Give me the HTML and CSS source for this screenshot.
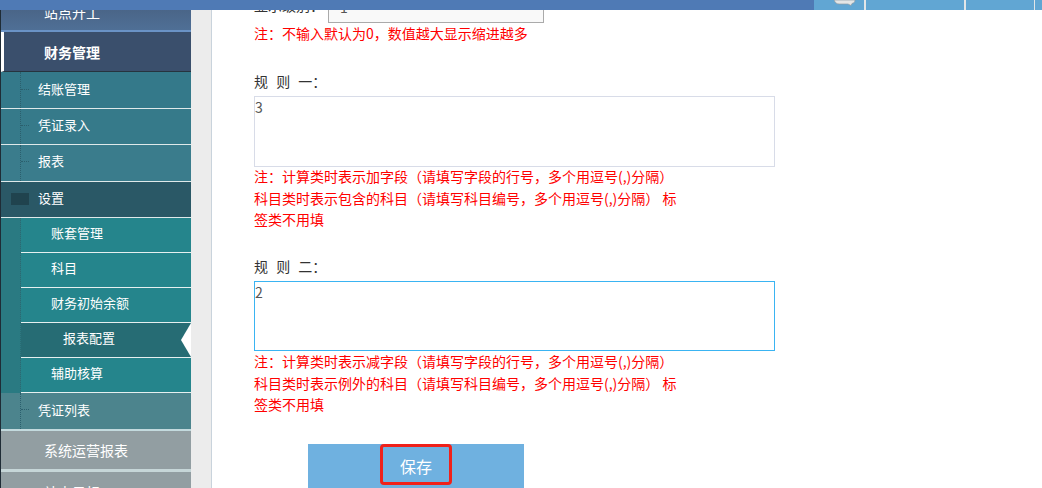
FILE: index.html
```html
<!DOCTYPE html>
<html lang="zh">
<head>
<meta charset="UTF-8">
<title>报表配置</title>
<link rel="stylesheet" href="styles.css">
</head>
<body>

<div class="topbar">
    <div class="top-fill"></div>
    <div class="top-btn top-msg">
        <svg class="msg-icon" width="22" height="6" viewBox="0 0 22 6">
            <path d="M0 0H21C21 2 20 3 18 3.500L17 5.500L14 4H5C2 4 1 2 0 0Z" fill="#e4e6e6" stroke="#8f9ba3" stroke-width="0.7"/>
        </svg>
    </div>
    <div class="top-btn top-wide"></div>
    <div class="top-btn top-mid"></div>
    <div class="top-btn top-end"></div>
</div>

<div class="layout">
    <div class="sidebar">
        <div class="nav-head nav-site"><span>站点开工</span></div>
        <div class="nav-head nav-finance">财务管理</div>
        <div class="nav-item nav-tall"><i class="dots"></i>结账管理</div>
        <div class="nav-item"><i class="dots"></i>凭证录入</div>
        <div class="nav-item nav-third"><i class="dots"></i>报表</div>
        <div class="nav-item nav-open"><i class="nav-icon"></i>设置</div>
        <div class="subnav">
            <div class="sub-item">账套管理</div>
            <div class="sub-item">科目</div>
            <div class="sub-item">财务初始余额</div>
            <div class="sub-item sub-active">报表配置</div>
            <div class="sub-item sub-last">辅助核算</div>
        </div>
        <div class="nav-item nav-last"><i class="dots"></i>凭证列表</div>
        <div class="nav-head nav-report">系统运营报表</div>
        <div class="nav-head nav-more"><span>站点目标</span></div>
    </div>
    <div class="gutter"></div>
    <div class="main">
        <div class="level-row">
            <label class="level-label">显示级别：</label>
            <input class="level-input" type="text" value="1">
        </div>
        <p class="note">注：不输入默认为0，数值越大显示缩进越多</p>

        <label class="rule-label rule-first">规 则 一：</label>
        <textarea class="rule-box">3</textarea>
        <p class="note note-tight">注：计算类时表示加字段（请填写字段的行号，多个用逗号(,)分隔）<br>科目类时表示包含的科目（请填写科目编号，多个用逗号(,)分隔） 标签类不用填</p>

        <label class="rule-label rule-second">规 则 二：</label>
        <textarea class="rule-box rule-focus">2</textarea>
        <p class="note">注：计算类时表示减字段（请填写字段的行号，多个用逗号(,)分隔）<br>科目类时表示例外的科目（请填写科目编号，多个用逗号(,)分隔） 标签类不用填</p>

        <div class="save-row">
            <button class="save-btn">保存<span class="save-mark"></span></button>
        </div>
    </div>
</div>

</body>
</html>
```

FILE: styles.css
```css
html, body {
    margin: 0;
    padding: 0;
    height: 488px;
    overflow: hidden;
    background-color: #fff;
    font-family: "Noto Sans CJK SC", "Noto Sans", sans-serif;
}
.topbar {
    display: flex;
    height: 10px;
    background-color: #4f7ab5;
}
.top-fill {
    width: 814px;
}
.top-btn {
    height: 10px;
    background-color: #61a6d3;
    border-right: 2px solid #e2e6e8;
    box-sizing: border-box;
}
.top-msg {
    position: relative;
    width: 52px;
}
.msg-icon {
    position: absolute;
    left: 20px;
    top: 0;
}
.top-wide {
    width: 100px;
}
.top-mid {
    width: 69px;
    border-right-width: 1px;
}
.top-end {
    width: 7px;
    border: none;
}
.layout {
    display: flex;
    height: 478px;
}
.sidebar {
    width: 191px;
    flex: none;
    border-left: 1px solid #1f2c36;
    box-sizing: border-box;
    color: #fff;
    overflow: hidden;
    font-size: 13px;
}
.gutter {
    width: 20px;
    flex: none;
    background-color: #ececec;
    border-right: 1px solid #c9d3dc;
}
.nav-head {
    font-size: 14px;
    padding-left: 43px;
    box-sizing: border-box;
}
.nav-site {
    height: 22px;
    line-height: 4px;
    background: linear-gradient(#4a6588, #4f6f96);
    border-bottom: 2px solid #6a93c6;
    overflow: hidden;
}
.nav-finance {
    height: 40px;
    line-height: 40px;
    font-weight: bold;
    background-color: #3a4f6c;
    border-left: 3px solid #fff;
    border-bottom: 1px solid #26343f;
    padding-left: 40px;
}
.nav-item {
    position: relative;
    height: 36px;
    line-height: 32px;
    padding-left: 37px;
    box-sizing: border-box;
    border-bottom: 1px solid #dfe9ea;
    background-color: #367a8a;
}
.nav-tall {
    height: 37px;
    line-height: 34px;
    background-color: #34798a;
}
.nav-third {
    height: 37px;
    background-color: #3a7c8c;
}
.nav-item::before {
    content: "";
    position: absolute;
    left: 19px;
    top: 0;
    bottom: 0;
    border-left: 1px dotted #2b5f6d;
}
.dots {
    position: absolute;
    left: 20px;
    top: 16px;
    width: 8px;
    border-top: 1px dotted #2b5f6d;
}
.nav-tall .dots {
    top: 17px;
}
.nav-open {
    background-color: #2a5866;
    height: 36px;
}
.nav-open::before {
    display: none;
}
.nav-icon {
    position: absolute;
    left: 10px;
    top: 11px;
    width: 18px;
    height: 12px;
    background-color: #20434e;
}
.subnav {
    background-color: #2a7a82;
    padding-left: 20px;
}
.sub-item {
    position: relative;
    height: 35px;
    line-height: 30px;
    padding-left: 30px;
    box-sizing: border-box;
    border-bottom: 1px solid #e6f0f0;
    background-color: #25858c;
}
.sub-item::before {
    content: "";
    position: absolute;
    left: -1px;
    top: 0;
    bottom: -1px;
    border-left: 1px dotted #2b6a72;
}
.sub-active {
    padding-left: 42px;
    background-color: #266c74;
}
.sub-active::after {
    content: "";
    position: absolute;
    right: 0;
    top: 0;
    border-style: solid;
    border-width: 17px 10px 17px 0;
    border-color: transparent #fff transparent transparent;
}
.nav-last {
    height: 36px;
    line-height: 34px;
    background-color: #4c848d;
    border-bottom: none;
}
.nav-report {
    height: 43px;
    line-height: 39px;
    background-color: #929ea2;
    border-top: 2px solid #c3dade;
    border-bottom: 3px solid #c6d6d8;
}
.nav-more {
    height: 16px;
    line-height: 40px;
    background-color: #929ea2;
    overflow: hidden;
}
.main {
    flex: 1;
    height: 478px;
    padding-left: 42px;
    overflow: hidden;
    color: #333;
    font-size: 14px;
}
.level-row {
    display: flex;
    align-items: center;
    height: 33px;
    margin-top: -20px;
}
.level-label {
    width: 74px;
    flex: none;
    margin-bottom: 3px;
}
.level-input {
    width: 216px;
    height: 33px;
    box-sizing: border-box;
    padding: 0 0 0 11px;
    border: 1px solid #aaa;
    background-color: #f9f9f9;
    color: #555;
    font: inherit;
    outline: none;
}
.note {
    width: 430px;
    margin: 0;
    color: #f00;
    line-height: 21.5px;
}
.note-tight {
    margin-top: -1px;
}
.rule-label {
    display: block;
    line-height: 22px;
    word-spacing: 5px;
    margin-bottom: 4px;
}
.rule-first {
    margin-top: 25.500px;
}
.rule-second {
    margin-top: 24.500px;
}
.rule-box {
    display: block;
    width: 521px;
    height: 71px;
    box-sizing: border-box;
    padding: 0;
    margin: 0;
    border: 1px solid #d8dce8;
    resize: none;
    outline: none;
    color: #555;
    font: inherit;
    line-height: 20px;
    overflow: hidden;
}
.rule-focus {
    height: 70px;
    border-color: #3ab4f2;
}
.save-row {
    margin-top: 28.500px;
    padding-left: 54px;
}
.save-btn {
    position: relative;
    display: block;
    width: 216px;
    height: 44px;
    border: none;
    padding: 0;
    background-color: #6fb1e0;
    color: #fff;
    font: inherit;
    font-size: 16px;
}
.save-mark {
    position: absolute;
    left: 72px;
    top: 0;
    width: 72px;
    height: 41px;
    box-sizing: border-box;
    border: 3px solid #f0211a;
    border-radius: 4px;
}
```
